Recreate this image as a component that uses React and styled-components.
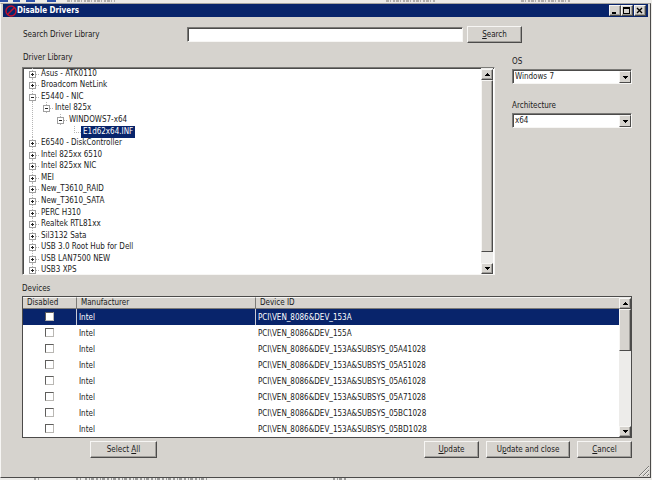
import React, {useState} from 'react';
import styled, {createGlobalStyle} from 'styled-components';

const face = '#d6d3ce';
const navy = '#08246b';
const shadow = '#7b7a77';
const dark = '#4c4b4a';
const light = '#f7f6f4';

const GlobalStyle = createGlobalStyle`
    * {
        box-sizing: border-box;
    }

    body {
        margin: 0;
        background: #ecebe8;
    }

    body, button, input, select {
        font-family: 'DejaVu Sans Condensed', 'Liberation Sans', Arial, sans-serif;
        font-size: 8px;
        line-height: 12px;
        color: #1a1a1a;
    }
`;

const Desktop = styled.div`
    display: flex;
    flex-direction: column;
    min-height: 100vh;
    padding-right: 1px;
`;

const Behind = styled.svg`
    display: block;
    width: 100%;
    height: ${props => props.$size}px;
`;

const Dialog = styled.main`
    position: relative;
    flex: 1;
    padding: 0 2px 2px;
    background: ${face};
    border: 1px solid;
    border-color: #a5a39f ${dark} ${dark} ${light};
`;

const TitleBar = styled.header`
    display: flex;
    align-items: center;
    height: 13px;
    padding: 0 2px;
    background: ${navy};
`;

const Title = styled.h1`
    flex: 1;
    margin: 0;
    font-size: 8px;
    line-height: 12px;
    color: #fff;
`;

const Bevel = styled.button`
    display: flex;
    align-items: center;
    justify-content: center;
    flex: none;
    margin: 0;
    padding: 0;
    background: ${face};
    border: 1px solid;
    border-color: ${light} ${dark} ${dark} ${light};
    box-shadow: inset -1px -1px 0 #a09e9a;
`;

const WindowBtn = styled(Bevel)`
    width: 12px;
    height: 11px;
    margin-left: ${props => props.$gap ? '1px' : '0'};
`;

const Btn = styled(Bevel)`
    display: block;
    width: ${props => props.$wide || 55}px;
    height: 17px;
    padding-top: 1px;
    text-align: center;
`;

const Content = styled.div`
    padding: 9px 16px 0 19px;
`;

const SearchForm = styled.form`
    display: flex;
    align-items: center;
    padding-right: 110px;
    margin-bottom: 8px;
`;

const Label = styled.label`
    display: block;
    line-height: 14px;
`;

const SearchLabel = styled(Label)`
    width: 165px;
    padding-left: 1px;
`;

const Sunken = `
    background: #fff;
    border: 1px solid;
    border-color: ${shadow} ${light} ${light} ${shadow};
    box-shadow: inset 1px 1px 0 ${dark};
`;

const SearchInput = styled.input`
    flex: 1;
    min-width: 0;
    height: 15px;
    margin-right: 4px;
    padding: 0 3px;
    border-radius: 0;
    outline: none;
    ${Sunken}
`;

const Columns = styled.div`
    display: grid;
    grid-template-columns: 1fr 120px;
    column-gap: 17px;
    margin-bottom: 7px;
`;

const Heading = styled.h2`
    margin: 0 0 ${props => props.$space}px;
    padding-left: ${props => props.$inset ? '1px' : '0'};
    font-size: 8px;
    font-weight: normal;
    line-height: 14px;
`;

const TreeBox = styled.div`
    display: flex;
    height: 208px;
    padding-right: 1px;
    overflow: hidden;
    ${Sunken}
`;

const Tree = styled.ul`
    display: flex;
    flex: 1;
    flex-direction: column;
    height: 208px;
    margin: 0;
    padding: 0 0 0 2px;
    list-style: none;
`;

const TreeRow = styled.li`
    display: flex;
    flex: 1;
    align-items: center;
    min-height: 0;
`;

const TreeCell = styled.svg`
    flex: none;
    display: block;
    width: 14px;
    height: 12px;
`;

const TreeText = styled.span`
    padding: 0 2px;
    line-height: 12px;
    white-space: nowrap;
    color: ${props => props.$selected ? '#fff' : 'inherit'};
    background: ${props => props.$selected ? navy : 'transparent'};
`;

const Filters = styled.div`
    padding-top: 4px;
`;

const Field = styled.div`
    margin-bottom: 15px;
`;

const Combo = styled.div`
    display: grid;
    height: 15px;
    ${Sunken}
`;

const Select = styled.select`
    grid-area: 1 / 1;
    width: 100%;
    padding: 0 14px 0 2px;
    appearance: none;
    background: transparent;
    border: none;
    border-radius: 0;
    outline: none;
`;

const ComboArrow = styled.span`
    grid-area: 1 / 1;
    justify-self: end;
    display: flex;
    align-items: center;
    justify-content: center;
    width: 12px;
    margin-top: 1px;
    background: ${face};
    border: 1px solid;
    border-color: ${light} ${dark} ${dark} ${light};
    pointer-events: none;
`;

const Scroll = styled.div`
    display: flex;
    flex: none;
    flex-direction: column;
    width: 12px;
    padding-top: 1px;
    background: #edecea;
`;

const ScrollBtn = styled(Bevel)`
    width: 12px;
    height: 11px;
`;

const Track = styled.div`
    flex: 1;
`;

const Thumb = styled.div`
    height: ${props => props.$size}%;
    background: ${face};
    border: 1px solid;
    border-color: ${light} ${dark} ${dark} ${light};
    box-shadow: inset -1px 0 0 #a09e9a;
`;

const GridBox = styled.div`
    display: flex;
    align-items: stretch;
    height: 142px;
    background: #fff;
    border: 1px solid ${dark};
    overflow: hidden;
`;

const DeviceTable = styled.table`
    flex: 1;
    width: 100%;
    height: 140px;
    table-layout: fixed;
    border-collapse: separate;
    border-spacing: 0;
`;

const Th = styled.th`
    width: ${props => props.$wide ? props.$wide + 'px' : 'auto'};
    height: 12px;
    padding: 0 4px;
    font-weight: normal;
    line-height: 10px;
    text-align: left;
    background: ${face};
    border-top: 1px solid ${light};
    border-bottom: 1px solid ${shadow};
    border-right: ${props => props.$wide ? `1px solid ${shadow}` : 'none'};
`;

const Td = styled.td`
    height: 16px;
    padding: ${props => props.$center ? '0 2px 2px' : '2px 2px 0'};
    line-height: 12px;
    text-align: ${props => props.$center ? 'center' : 'left'};
    white-space: nowrap;
    border-right: ${props => props.$line ? `1px solid ${props.$selected ? '#c9cbd6' : '#fff'}` : 'none'};
`;

const Row = styled.tr`
    color: ${props => props.$selected ? '#fff' : 'inherit'};
    background: ${props => props.$selected ? navy : '#fff'};
`;

const Check = styled.input`
    display: block;
    width: 9px;
    height: 9px;
    margin: 0 auto;
    appearance: none;
    background: #fff;
    border: 1px solid;
    border-color: #5f5e5c #b9b7b3 #b9b7b3 #5f5e5c;

    &:checked {
        box-shadow: inset 0 0 0 2px #fff;
        background: #000;
    }
`;

const Footer = styled.footer`
    display: flex;
    gap: 7px;
    padding-top: 3px;
    padding-left: 68px;
`;

const Space = styled.span`
    flex: 1;
`;

const Grip = styled.svg`
    position: absolute;
    right: 1px;
    bottom: 1px;
    width: 10px;
    height: 10px;
`;

const drivers = [
    {name: 'Asus - ATK0110', depth: 0},
    {name: 'Broadcom NetLink', depth: 0},
    {name: 'E5440 - NIC', depth: 0, open: true},
    {name: 'Intel 825x', depth: 1, open: true},
    {name: 'WINDOWS7-x64', depth: 2, open: true},
    {name: 'E1d62x64.INF', depth: 3, leaf: true},
    {name: 'E6540 - DiskController', depth: 0},
    {name: 'Intel 825xx 6510', depth: 0},
    {name: 'Intel 825xx NIC', depth: 0},
    {name: 'MEI', depth: 0},
    {name: 'New_T3610_RAID', depth: 0},
    {name: 'New_T3610_SATA', depth: 0},
    {name: 'PERC H310', depth: 0},
    {name: 'Realtek RTL81xx', depth: 0},
    {name: 'Sil3132 Sata', depth: 0},
    {name: 'USB 3.0 Root Hub for Dell', depth: 0},
    {name: 'USB LAN7500 NEW', depth: 0},
    {name: 'USB3 XPS', depth: 0}
];

const devices = [
    'PCI\\VEN_8086&DEV_153A',
    'PCI\\VEN_8086&DEV_155A',
    'PCI\\VEN_8086&DEV_153A&SUBSYS_05A41028',
    'PCI\\VEN_8086&DEV_153A&SUBSYS_05A51028',
    'PCI\\VEN_8086&DEV_153A&SUBSYS_05A61028',
    'PCI\\VEN_8086&DEV_153A&SUBSYS_05A71028',
    'PCI\\VEN_8086&DEV_153A&SUBSYS_05BC1028',
    'PCI\\VEN_8086&DEV_153A&SUBSYS_05BD1028'
];

const Arrow = ({up}) => (
    <svg width="5" height="3" viewBox="0 0 5 3" shapeRendering="crispEdges">
        <path d={up ? 'M2 0h1v1h1v1h1v1H0V2h1V1h1z' : 'M0 0h5v1H4v1H3v1H2V2H1V1H0z'} fill="#000"/>
    </svg>
);

const NoEntry = () => (
    <svg width="12" height="12" viewBox="0 0 12 12">
        <circle cx="6" cy="6" r="5" fill="none" stroke="#c4122f" strokeWidth="1.4"/>
        <path d="M9.5 2.5l-7 7" stroke="#c4122f" strokeWidth="1.4"/>
    </svg>
);

// plus / minus box together with the dotted lines that run through it
const Toggle = ({open, leaf}) => (
    <TreeCell viewBox="0 0 14 12" shapeRendering="crispEdges">
        <path
            d={leaf ? 'M7.5 0v6M7 6.5h7' : 'M7.5 0v12M11 6.5h3'}
            stroke="#b5b5b5"
            strokeDasharray="1 1"
        />
        {!leaf && <rect x="4.5" y="3.5" width="6" height="6" fill="#fff" stroke="#a0a0a0"/>}
        {!leaf && <path d={open ? 'M6 6.5h3' : 'M6 6.5h3M7.5 5v3'} stroke="#222"/>}
    </TreeCell>
);

const Guide = ({line}) => (
    <TreeCell viewBox="0 0 14 12" shapeRendering="crispEdges">
        {line && <path d="M7.5 0v12" stroke="#b5b5b5" strokeDasharray="1 1"/>}
    </TreeCell>
);

const ScrollBar = ({size}) => (
    <Scroll>
        <ScrollBtn type="button" aria-label="Scroll up"><Arrow up/></ScrollBtn>
        <Track><Thumb $size={size}/></Track>
        <ScrollBtn type="button" aria-label="Scroll down"><Arrow/></ScrollBtn>
    </Scroll>
);

const ComboField = ({id, label, options}) => (
    <Field>
        <Label htmlFor={id}>{label}</Label>
        <Combo>
            <Select id={id}>
                {options.map(o => <option key={o}>{o}</option>)}
            </Select>
            <ComboArrow><Arrow/></ComboArrow>
        </Combo>
    </Field>
);

export default function App() {
    const [selected, setSelected] = useState(0);

    return (
        <Desktop>
            <GlobalStyle/>
            <Behind $size={3} aria-hidden="true">
                <path d="M0 1h8M13 1h7M26 1h9M47 1h9" stroke="#2c50a8" strokeWidth="2"/>
                <path d="M67 1h48M386 1h49M521 1h50" stroke="#77736e" strokeDasharray="3 1 1 2 2 1"/>
            </Behind>
            <Dialog>
                <TitleBar>
                    <NoEntry/>
                    <Title>Disable Drivers</Title>
                    <WindowBtn aria-label="Minimize">
                        <svg width="8" height="7"><path d="M1 6h4" stroke="#000" strokeWidth="2"/></svg>
                    </WindowBtn>
                    <WindowBtn aria-label="Maximize">
                        <svg width="8" height="7" shapeRendering="crispEdges">
                            <path d="M.5 .5h6v6h-6zM0 1.5h7" fill="none" stroke="#000"/>
                        </svg>
                    </WindowBtn>
                    <WindowBtn aria-label="Close" $gap>
                        <svg width="8" height="7"><path d="M1 1l5 5M6 1l-5 5" stroke="#000" strokeWidth="1.4"/></svg>
                    </WindowBtn>
                </TitleBar>
                <Content>
                    <SearchForm onSubmit={e => e.preventDefault()}>
                        <SearchLabel htmlFor="search">Search Driver Library</SearchLabel>
                        <SearchInput id="search" type="text"/>
                        <Btn><u>S</u>earch</Btn>
                    </SearchForm>
                    <Columns>
                        <section>
                            <Heading $space={2} $inset>Driver Library</Heading>
                            <TreeBox>
                                <Tree>
                                    {drivers.map(d => (
                                        <TreeRow key={d.name}>
                                            {[...Array(d.depth)].map((_, i) => <Guide key={i} line={i === 0}/>)}
                                            <Toggle open={d.open} leaf={d.leaf}/>
                                            <TreeText $selected={d.leaf}>{d.name}</TreeText>
                                        </TreeRow>
                                    ))}
                                </Tree>
                                <ScrollBar size={94}/>
                            </TreeBox>
                        </section>
                        <Filters>
                            <ComboField id="os" label="OS" options={['Windows 7']}/>
                            <ComboField id="arch" label="Architecture" options={['x64']}/>
                        </Filters>
                    </Columns>
                    <Heading $space={0}>Devices</Heading>
                    <GridBox>
                        <DeviceTable>
                            <thead>
                                <tr>
                                    <Th $wide={54}>Disabled</Th>
                                    <Th $wide={179}>Manufacturer</Th>
                                    <Th>Device ID</Th>
                                </tr>
                            </thead>
                            <tbody>
                                {devices.map((id, i) => (
                                    <Row key={id} $selected={selected === i} onClick={() => setSelected(i)}>
                                        <Td $center $line $selected={selected === i}>
                                            <Check type="checkbox" aria-label={'Disable ' + id}/>
                                        </Td>
                                        <Td $line $selected={selected === i}>Intel</Td>
                                        <Td>{id}</Td>
                                    </Row>
                                ))}
                            </tbody>
                        </DeviceTable>
                        <ScrollBar size={36}/>
                    </GridBox>
                    <Footer>
                        <Btn type="button" $wide={67}>Select <u>A</u>ll</Btn>
                        <Space/>
                        <Btn type="button"><u>U</u>pdate</Btn>
                        <Btn type="button" $wide={84}>U<u>p</u>date and close</Btn>
                        <Btn type="button"><u>C</u>ancel</Btn>
                    </Footer>
                </Content>
                <Grip viewBox="0 0 10 10" aria-hidden="true">
                    <path d="M0 10L10 0M4 10l6-6M8 10l2-2" stroke="#7b7a77"/>
                    <path d="M1 10l9-9M5 10l5-5M9 10l1-1" stroke="#fff" strokeWidth=".6"/>
                </Grip>
            </Dialog>
            <Behind $size={2} aria-hidden="true">
                <path d="M34 1h6M76 1h6M85 1h122M333 1h14" stroke="#4a4a4a" strokeDasharray="2 2 1 1 3 2"/>
            </Behind>
        </Desktop>
    );
}
